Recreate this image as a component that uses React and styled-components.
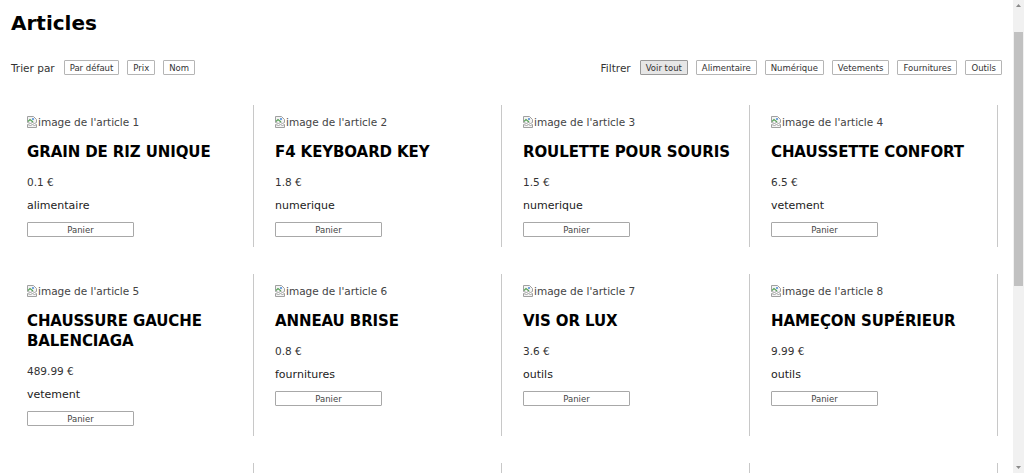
import styled, { createGlobalStyle } from "styled-components";

const articles = [
    { id: 1, nom: "Grain de riz unique", prix: 0.1, categorie: "alimentaire" },
    { id: 2, nom: "F4 keyboard key", prix: 1.8, categorie: "numerique" },
    { id: 3, nom: "Roulette pour souris", prix: 1.5, categorie: "numerique" },
    { id: 4, nom: "Chaussette confort", prix: 6.5, categorie: "vetement" },
    { id: 5, nom: "Chaussure gauche Balenciaga", prix: 489.99, categorie: "vetement" },
    { id: 6, nom: "Anneau brise", prix: 0.8, categorie: "fournitures" },
    { id: 7, nom: "Vis or lux", prix: 3.6, categorie: "outils" },
    { id: 8, nom: "Hameçon supérieur", prix: 9.99, categorie: "outils" },
    { id: 9, nom: "Trombone doré", prix: 2.5, categorie: "fournitures" },
    { id: 10, nom: "Câble USB court", prix: 4.2, categorie: "numerique" },
    { id: 11, nom: "Bonbon mystère", prix: 0.5, categorie: "alimentaire" },
    { id: 12, nom: "Clou rouillé", prix: 0.2, categorie: "outils" },
    { id: 13, nom: "Gant droit", prix: 12.9, categorie: "vetement" },
    { id: 14, nom: "Gomme usée", prix: 0.3, categorie: "fournitures" },
    { id: 15, nom: "Pile vide", prix: 0.9, categorie: "numerique" },
    { id: 16, nom: "Sel de table", prix: 1.1, categorie: "alimentaire" },
];

const tris = ["Par défaut", "Prix", "Nom"];
const filtres = ["Voir tout", "Alimentaire", "Numérique", "Vetements", "Fournitures", "Outils"];

const BrokenImg = () => (
    <svg width="10" height="12" viewBox="0 0 10 12">
        <path d="M0.5 0.5h6l3 3v3l-2 1-2-1-2 1-3-1z" fill="#f4f4f4" stroke="#a0a0a0" />
        <path d="M1 5.5l2-2 3 2.5" fill="none" stroke="#5aa35a" strokeWidth="1.2" />
        <circle cx="6" cy="3" r="1" fill="#4a8ad4" />
        <path d="M0.5 8.5l3 1 2-1 2 1 2-1v3h-9z" fill="#f4f4f4" stroke="#a0a0a0" />
    </svg>
);

const Arrow = ({ down }) => (
    <svg width="11" height="12" viewBox="0 0 11 12">
        <path d={down ? "M3 5h5l-2.5 3z" : "M3 7h5l-2.5-3z"} fill="#8a8a8a" />
    </svg>
);

const App = () => {
    return (
        <>
            <GlobalStyle />
            <Frame>
                <Page>
                    <Title>Articles</Title>
                    <Toolbar>
                        <Group>
                            <Label>Trier par</Label>
                            {tris.map((t) => (
                                <SmallButton key={t} type="button">{t}</SmallButton>
                            ))}
                        </Group>
                        <Group>
                            <Label>Filtrer</Label>
                            {filtres.map((f, i) => (
                                <SmallButton key={f} type="button" $active={i === 0}>{f}</SmallButton>
                            ))}
                        </Group>
                    </Toolbar>
                    <Grid>
                        {articles.map((a) => (
                            <Card key={a.id}>
                                <ImageAlt>
                                    <BrokenImg />
                                    image de l'article {a.id}
                                </ImageAlt>
                                <ArticleName>{a.nom}</ArticleName>
                                <Price>{a.prix} €</Price>
                                <Category>{a.categorie}</Category>
                                <CartButton type="button">Panier</CartButton>
                            </Card>
                        ))}
                    </Grid>
                </Page>
                <ScrollTrack>
                    <Arrow />
                    <Thumb />
                    <Arrow down />
                </ScrollTrack>
            </Frame>
        </>
    );
};

export default App;

const GlobalStyle = createGlobalStyle`
    html, body {
        margin: 0;
        height: 100%;
        overflow: hidden;
        background: #fff;
        font-family: "DejaVu Sans", "Liberation Sans", sans-serif;
        color: #111;
    }
`;

const Frame = styled.div`
    display: flex;
    height: 100vh;
`;

const Page = styled.div`
    flex: 1;
    min-width: 0;
    overflow-y: auto;
    scrollbar-width: none;
    padding: 0 11px 44px 6px;
`;

const ScrollTrack = styled.div`
    width: 11px;
    flex-shrink: 0;
    background: #f1f1f1;
    display: flex;
    flex-direction: column;
    justify-content: space-between;
    align-items: center;
`;

const Thumb = styled.div`
    width: 9px;
    height: 254px;
    margin-bottom: auto;
    margin-top: 20px;
    background: #c1c1c1;
`;

const Title = styled.h1`
    margin: 11px 0 0 5px;
    font-size: 20px;
    line-height: 24px;
    font-weight: 700;
    color: #000;
`;

const Toolbar = styled.div`
    margin: 25px 0 0 5px;
    display: flex;
    align-items: center;
    justify-content: space-between;
`;

const Group = styled.div`
    display: flex;
    align-items: center;
    gap: 8px;
`;

const Label = styled.span`
    font-size: 10.5px;
    color: #333;
    margin-right: 1px;
`;

const SmallButton = styled.button`
    height: 15px;
    padding: 0 5px;
    font-family: inherit;
    font-size: 8.5px;
    color: #333;
    background: ${(p) => (p.$active ? "#e6e6e6" : "#fff")};
    border: 1px solid ${(p) => (p.$active ? "#999" : "#b5b5b5")};
    border-radius: 1px;
    cursor: pointer;
`;

const Grid = styled.div`
    margin-top: 30px;
    display: grid;
    grid-template-columns: repeat(4, 248px);
    row-gap: 27px;
`;

const Card = styled.div`
    padding: 10px 6px 10px 21px;
    border-right: 1px solid #c8c8c8;
    display: flex;
    flex-direction: column;
    align-items: flex-start;
`;

const ImageAlt = styled.div`
    display: flex;
    align-items: center;
    gap: 1px;
    height: 14px;
    font-size: 10.5px;
    color: #444;
`;

const ArticleName = styled.h2`
    margin: 13px 0 0;
    font-size: 15px;
    line-height: 20px;
    font-weight: 700;
    letter-spacing: -0.1px;
    text-transform: uppercase;
    color: #000;
`;

const Price = styled.p`
    margin: 14px 0 0;
    font-size: 10.5px;
    line-height: 12px;
    color: #333;
`;

const Category = styled.p`
    margin: 11px 0 0;
    font-size: 11px;
    line-height: 13px;
    color: #222;
`;

const CartButton = styled.button`
    margin-top: 10px;
    width: 107px;
    height: 15px;
    padding: 0;
    font-family: inherit;
    font-size: 8.5px;
    color: #444;
    background: #fff;
    border: 1px solid #a8a8a8;
    border-radius: 1px;
    cursor: pointer;
`;
